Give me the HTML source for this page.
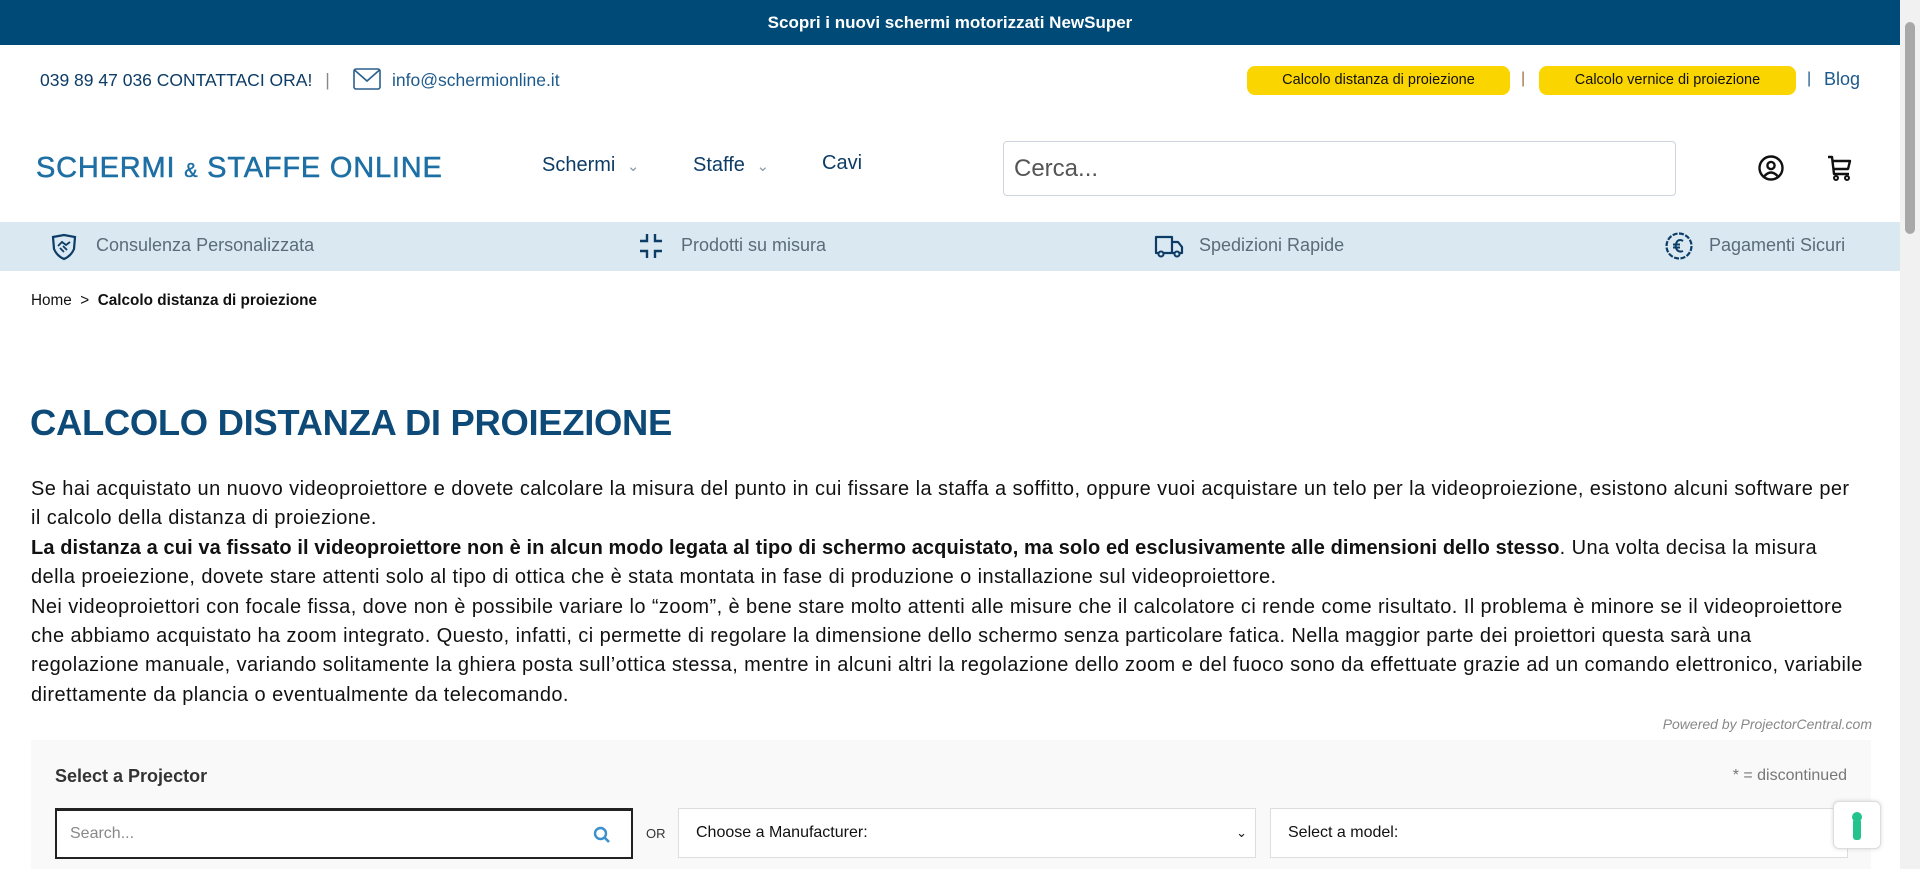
<!DOCTYPE html>
<html><head><meta charset="utf-8">
<style>
*{margin:0;padding:0;box-sizing:border-box}
body{width:1920px;height:869px;overflow:hidden;background:#fff;font-family:"Liberation Sans",sans-serif;position:relative;color:#111}
.a{position:absolute;white-space:nowrap}
.top{left:0;top:0;width:1900px;height:45px;background:#004a77;color:#fff;font-weight:bold;font-size:17px;text-align:center;line-height:45px}
.sb{left:1900px;top:0;width:20px;height:869px;background:#f1f1f1}
.sbt{left:1905px;top:22px;width:10px;height:212px;background:#a8a8a8;border-radius:5px}
.navy{color:#0d3c66}
.yb{background:#fbd500;border-radius:8px;height:29px;line-height:29px;font-size:14.5px;color:#111;text-align:center}
.ben{top:222px;left:0;width:1900px;height:49px;background:#d9e8f1}
.bt{font-size:18px;color:#5b6b79;top:235px}
p.t{position:absolute;left:31px;top:475px;font-size:20px;letter-spacing:0.42px;line-height:29.4px;color:#111;white-space:nowrap}
.sel{border:1px solid #ddd;background:#fff;height:50px;top:808px;font-size:16px;line-height:48px;padding-left:17px;color:#111}
</style></head><body>
<div class="a top">Scopri i nuovi schermi motorizzati NewSuper</div>
<div class="a sb"></div><div class="a sbt"></div>
<div class="a navy" style="left:40px;top:70px;font-size:17.5px">039 89 47 036 CONTATTACI ORA! <span style="color:#888;margin-left:8px">|</span></div>
<svg class="a" style="left:353px;top:68px" width="28" height="22" viewBox="0 0 28 22"><rect x="1" y="1" width="26" height="20" rx="2" fill="none" stroke="#2a5f8c" stroke-width="1.6"/><path d="M1.5 2 L14 13 L26.5 2" fill="none" stroke="#2a5f8c" stroke-width="1.6"/></svg>
<div class="a" style="left:392px;top:70px;font-size:17.5px;color:#1d5a8c">info@schermionline.it</div>
<div class="a yb" style="left:1247px;top:66px;width:263px">Calcolo distanza di proiezione</div>
<div class="a" style="left:1521px;top:70px;color:#a07040;font-size:16px">|</div>
<div class="a yb" style="left:1539px;top:66px;width:257px">Calcolo vernice di proiezione</div>
<div class="a" style="left:1807px;top:70px;color:#1d5a8c;font-size:16px">|</div>
<div class="a" style="left:1824px;top:69px;color:#1d5a8c;font-size:18px">Blog</div>
<div class="a" style="left:36px;top:152px;font-size:29px;color:#1e6fa3;letter-spacing:0.8px;-webkit-text-stroke:0.5px #1e6fa3">SCHERMI <span style="font-size:20px">&amp;</span> STAFFE ONLINE</div>
<div class="a navy" style="left:542px;top:154px;font-size:20px">Schermi <span style="color:#8a9aa8;font-size:15px;margin-left:6px">&#8964;</span></div>
<div class="a navy" style="left:693px;top:154px;font-size:20px">Staffe <span style="color:#8a9aa8;font-size:15px;margin-left:6px">&#8964;</span></div>
<div class="a navy" style="left:822px;top:152px;font-size:20px">Cavi</div>
<div class="a" style="left:1003px;top:141px;width:673px;height:55px;border:1px solid #ccd5de;border-radius:4px;font-size:24px;color:#555;line-height:53px;padding-left:10px">Cerca...</div>
<svg class="a" style="left:1757px;top:154px" width="28" height="28" viewBox="0 0 28 28"><circle cx="14" cy="14" r="11.5" fill="none" stroke="#111" stroke-width="2.4"/><circle cx="14" cy="11.5" r="3.6" fill="none" stroke="#111" stroke-width="2.4"/><path d="M7.5 22 Q14 15 20.5 22" fill="none" stroke="#111" stroke-width="2.4"/></svg>
<svg class="a" style="left:1826px;top:154px" width="28" height="28" viewBox="0 0 28 28"><path d="M2 3 H6 L8 20 H23 M7 7 H24 L22 15 H8" fill="none" stroke="#111" stroke-width="2.4" stroke-linejoin="round"/><circle cx="10" cy="24" r="2" fill="none" stroke="#111" stroke-width="2"/><circle cx="21" cy="24" r="2" fill="none" stroke="#111" stroke-width="2"/></svg>
<div class="a ben"></div>
<svg class="a" style="left:50px;top:233px" width="28" height="28" viewBox="0 0 28 28"><path d="M3 4 L14 2 L25 4 L24 16 Q21 23 14 26 Q7 23 4 16 Z" fill="none" stroke="#0d3c66" stroke-width="2.2"/><path d="M8 13 L12 9 L16 12 L20 9 M10 15 L14 19 M13 13 L17 17" fill="none" stroke="#0d3c66" stroke-width="1.8"/></svg>
<div class="a bt" style="left:96px">Consulenza Personalizzata</div>
<svg class="a" style="left:637px;top:232px" width="28" height="28" viewBox="0 0 28 28"><path d="M10 2 V9 H3 M18 2 V9 H25 M10 26 V19 H3 M18 26 V19 H25" fill="none" stroke="#0d3c66" stroke-width="2.4"/></svg>
<div class="a bt" style="left:681px">Prodotti su misura</div>
<svg class="a" style="left:1154px;top:232px" width="30" height="28" viewBox="0 0 30 28"><path d="M2 5 H18 V21 H2 Z M18 10 H24 L28 15 V21 H18" fill="none" stroke="#0d3c66" stroke-width="2.2" stroke-linejoin="round"/><circle cx="7" cy="22" r="2.5" fill="#d9e8f1" stroke="#0d3c66" stroke-width="2"/><circle cx="23" cy="22" r="2.5" fill="#d9e8f1" stroke="#0d3c66" stroke-width="2"/></svg>
<div class="a bt" style="left:1199px">Spedizioni Rapide</div>
<svg class="a" style="left:1664px;top:231px" width="30" height="30" viewBox="0 0 30 30"><circle cx="15" cy="15" r="12.5" fill="none" stroke="#0d3c66" stroke-width="2.2" stroke-dasharray="5 1.5"/><path d="M19 10 Q16 8 13.5 10 Q11 13 12 17 Q14 22 19 20 M9 13.5 H16 M9 16.5 H16" fill="none" stroke="#0d3c66" stroke-width="2"/></svg>
<div class="a bt" style="left:1709px">Pagamenti Sicuri</div>
<div class="a" style="left:31px;top:292px;font-size:15.3px;color:#111">Home &nbsp;&gt;&nbsp; <b>Calcolo distanza di proiezione</b></div>
<div class="a" style="left:30px;top:402px;font-size:36.4px;color:#0d4a77;font-weight:bold;letter-spacing:-0.3px">CALCOLO DISTANZA DI PROIEZIONE</div>
<p class="t">Se hai acquistato un nuovo videoproiettore e dovete calcolare la misura del punto in cui fissare la staffa a soffitto, oppure vuoi acquistare un telo per la videoproiezione, esistono alcuni software per<br>il calcolo della distanza di proiezione.<br><b style="letter-spacing:0.1px">La distanza a cui va fissato il videoproiettore non è in alcun modo legata al tipo di schermo acquistato, ma solo ed esclusivamente alle dimensioni dello stesso</b>. Una volta decisa la misura<br>della proeiezione, dovete stare attenti solo al tipo di ottica che è stata montata in fase di produzione o installazione sul videoproiettore.<br>Nei videoproiettori con focale fissa, dove non è possibile variare lo “zoom”, è bene stare molto attenti alle misure che il calcolatore ci rende come risultato. Il problema è minore se il videoproiettore<br>che abbiamo acquistato ha zoom integrato. Questo, infatti, ci permette di regolare la dimensione dello schermo senza particolare fatica. Nella maggior parte dei proiettori questa sarà una<br>regolazione manuale, variando solitamente la ghiera posta sull’ottica stessa, mentre in alcuni altri la regolazione dello zoom e del fuoco sono da effettuate grazie ad un comando elettronico, variabile<br>direttamente da plancia o eventualmente da telecomando.</p>
<div class="a" style="right:48px;top:716px;font-size:14px;color:#888;font-style:italic">Powered by ProjectorCentral.com</div>
<div class="a" style="left:31px;top:740px;width:1840px;height:129px;background:#f9f9f9"></div>
<div class="a" style="left:55px;top:766px;font-size:18px;color:#333;font-weight:bold">Select a Projector</div>
<div class="a" style="right:73px;top:767px;font-size:16px;color:#777">* = discontinued</div>
<div class="a" style="left:55px;top:808px;width:578px;height:51px;border:2px solid #222;border-top-width:3px;background:#fff;font-size:16px;color:#888;line-height:46px;padding-left:13px">Search...</div>
<svg class="a" style="left:593px;top:826px" width="18" height="18" viewBox="0 0 18 18"><circle cx="7.5" cy="7.5" r="5.5" fill="none" stroke="#3a90cc" stroke-width="2.4"/><path d="M11.5 11.5 L16 16" stroke="#3a90cc" stroke-width="2.6"/></svg>
<div class="a" style="left:646px;top:826px;font-size:13px;color:#333">OR</div>
<div class="a sel" style="left:678px;width:578px">Choose a Manufacturer:<span style="position:absolute;right:8px;font-size:13px">&#8964;</span></div>
<div class="a sel" style="left:1270px;width:578px">Select a model:</div>
<div class="a" style="left:1833px;top:801px;width:48px;height:48px;background:#fff;border:1px solid #ddd;border-radius:6px;box-shadow:0 0 4px rgba(0,0,0,.15)"></div>
<svg class="a" style="left:1847px;top:810px" width="20" height="32" viewBox="0 0 20 32"><circle cx="10" cy="7" r="5" fill="#22c38e"/><rect x="6" y="9" width="8" height="21" rx="3" fill="#22c38e"/></svg>
</body></html>
